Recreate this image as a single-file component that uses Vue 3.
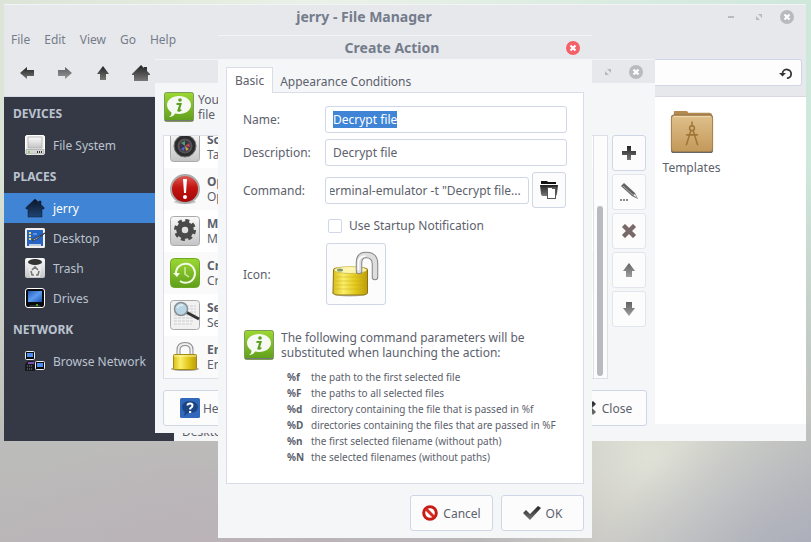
<script setup>
import { ref, onMounted } from 'vue'

const menus = ['File', 'Edit', 'View', 'Go', 'Help']
const navigation = [
  { icon: 'left', label: 'Back' },
  { icon: 'right', label: 'Forward', off: true },
  { icon: 'up', label: 'Parent folder' },
  { icon: 'house', label: 'Home' },
]
const groups = [
  { title: 'DEVICES', items: [{ name: 'File System', icon: 'disk' }] },
  {
    title: 'PLACES',
    items: [
      { name: 'jerry', icon: 'home', active: true },
      { name: 'Desktop', icon: 'desktop' },
      { name: 'Trash', icon: 'trash' },
      { name: 'Drives', icon: 'monitor' },
    ],
  },
  { title: 'NETWORK', items: [{ name: 'Browse Network', icon: 'network' }] },
]
const actions = [
  { name: 'Screenshot', note: 'Take a screenshot', icon: 'camera' },
  { name: 'Open as root', note: 'Open as root', icon: 'alert' },
  { name: 'Make executable', note: 'Make executable', icon: 'gear' },
  { name: 'Create backup', note: 'Create backup', icon: 'backup' },
  { name: 'Search', note: 'Search for files', icon: 'search' },
  { name: 'Encrypt file', note: 'Encrypt file', icon: 'lock' },
]
const tools = [
  { icon: 'plus', label: 'Add action' },
  { icon: 'pencil', label: 'Edit action', off: true },
  { icon: 'cross', label: 'Delete action', off: true },
  { icon: 'up', label: 'Move up', off: true },
  { icon: 'down', label: 'Move down', off: true },
]
const params = [
  ['%f', 'the path to the first selected file'],
  ['%F', 'the paths to all selected files'],
  ['%d', 'directory containing the file that is passed in %f'],
  ['%D', 'directories containing the files that are passed in %F'],
  ['%n', 'the first selected filename (without path)'],
  ['%N', 'the selected filenames (without paths)'],
]

const name = ref('Decrypt file')
const description = ref('Decrypt file')
const command = ref('x-terminal-emulator -t "Decrypt file...')
const notify = ref(false)
const nameField = ref(null)
const commandField = ref(null)

onMounted(() => {
  commandField.value.scrollLeft = commandField.value.scrollWidth
  nameField.value.focus()
  nameField.value.select()
})
</script>

<template>
  <div class="desk">
    <svg class="sprite" aria-hidden="true">
      <defs>
        <linearGradient id="ink" x2="0" y2="1"><stop stop-color="#222" /><stop offset="1" stop-color="#777" /></linearGradient>
        <linearGradient id="lime" x2="0" y2="1"><stop stop-color="#9bd832" /><stop offset="1" stop-color="#5f9e1c" /></linearGradient>
        <linearGradient id="metal" x2="0" y2="1"><stop stop-color="#fafafa" /><stop offset="1" stop-color="#c4c4c4" /></linearGradient>
        <linearGradient id="gold"><stop stop-color="#d9bd18" /><stop offset=".3" stop-color="#fbef6a" /><stop offset=".65" stop-color="#e2c81c" /><stop offset="1" stop-color="#bd9d0c" /></linearGradient>
        <linearGradient id="ruby" x2="0" y2="1"><stop stop-color="#e06058" /><stop offset=".45" stop-color="#c41410" /><stop offset="1" stop-color="#a00808" /></linearGradient>
        <linearGradient id="azure" x2="1" y2="1"><stop stop-color="#2458b0" /><stop offset=".5" stop-color="#5c9cf0" /><stop offset="1" stop-color="#1c50b0" /></linearGradient>
        <linearGradient id="tan" x2="0" y2="1"><stop stop-color="#dfc08b" /><stop offset="1" stop-color="#c3985a" /></linearGradient>
        <linearGradient id="navy" x2="0" y2="1"><stop stop-color="#0b1626" /><stop offset="1" stop-color="#1f4374" /></linearGradient>
      </defs>
      <symbol id="left" viewBox="0 0 20 20"><path d="M3 10l7-6v3h7v6h-7v3z" fill="url(#ink)" /></symbol>
      <symbol id="right" viewBox="0 0 20 20"><path d="M17 10l-7-6v3H3v6h7v3z" fill="url(#ink)" /></symbol>
      <symbol id="up" viewBox="0 0 20 20"><path d="M10 3l6 8h-3v6H7v-6H4z" fill="url(#ink)" /></symbol>
      <symbol id="down" viewBox="0 0 20 20"><path d="M10 17l6-8h-3V3H7v6H4z" fill="url(#ink)" /></symbol>
      <symbol id="house" viewBox="0 0 20 20"><path d="M10 2l3 3V4h3v4l3 3v1h-2v6H3v-6H1v-1z" fill="url(#ink)" /></symbol>
      <symbol id="plus" viewBox="0 0 20 20"><path d="M8 3h4v5h5v4h-5v5H8v-5H3V8h5z" fill="url(#ink)" /></symbol>
      <symbol id="cross" viewBox="0 0 20 20"><path d="M6 3l4 4 4-4 3 3-4 4 4 4-3 3-4-4-4 4-3-3 4-4-4-4z" fill="#3c2c2b" stroke="#9c6a67" stroke-width=".6" /></symbol>
      <symbol id="pencil" viewBox="0 0 20 20"><path d="M2 4l3-3 11 10 3 6-6-3z" fill="#222" /><path d="M4 4l10 9" stroke="#888" /><path d="M14 13l2-1 2 4z" fill="#eee" /><path d="M1 18h2m1 0h2m1 0h2" stroke="#222" stroke-width="1.500" /></symbol>
      <symbol id="reload" viewBox="0 0 16 16"><path d="M4 8a5 5 0 1 1 5 6" fill="none" stroke="#333" stroke-width="2" /><path d="M0 8h8l-4 4z" fill="#333" /></symbol>
      <symbol id="win-min" viewBox="0 0 14 14"><path d="M4 6h6v2H4z" fill="#b7babf" /></symbol>
      <symbol id="win-max" viewBox="0 0 14 14"><path d="M6 4h4v4zM4 6l4 4H4z" fill="#b7babf" /></symbol>
      <symbol id="win-close" viewBox="0 0 14 14"><circle cx="7" cy="7" r="7" fill="currentColor" /><path d="M4.500 4.500l5 5m0-5l-5 5" stroke="#fff" stroke-width="2.200" /></symbol>
      <symbol id="disk" viewBox="0 0 20 20"><rect x=".5" y=".5" width="19" height="19" rx="1.500" fill="#f0f0ee" stroke="#fff" /><path d="M3 2h14v11H3z" fill="url(#metal)" stroke="#aaa" stroke-width=".7" /><path d="M1 14.500h18V19H1z" fill="#d4d4d2" stroke="#999" stroke-width=".6" /><path d="M12 17h1m1 0h1m1 0h1" stroke="#333" stroke-width="2" /><circle cx="4" cy="17" r="1" fill="#7ac23a" /></symbol>
      <symbol id="home" viewBox="0 0 20 20"><path d="M10 1l4 3.500V3h2v3.500l3 3V11h-2v8H3v-8H1V9.500z" fill="url(#navy)" stroke="#0b1a30" stroke-width=".5" /></symbol>
      <symbol id="desktop" viewBox="0 0 20 20"><rect width="20" height="20" rx="1.500" fill="#f1f1f1" /><path d="M2 2h16v16H2z" fill="#2665c4" /><path d="M4 16h12v2H4z" fill="#c4cdda" /><path d="M5 4v8" stroke="#f6d75a" stroke-width="2" stroke-dasharray="2 1" /><path d="M8 6h4" stroke="#8fc0ff" /><path d="M7 12l4-2 9-5-8 6-4 2z" fill="#eee" stroke="#222" stroke-width=".8" /></symbol>
      <symbol id="trash" viewBox="0 0 20 20"><rect width="20" height="20" rx="2" fill="url(#metal)" /><path d="M3 5l2 14h10l2-14z" fill="#eaeaea" /><ellipse cx="10" cy="4" rx="7" ry="3" fill="#333" /><path d="M7 12l3-3 3 3m1 1l-1 4h-2m-2 0H7l-1-4" fill="none" stroke="#777" stroke-width="1.600" /></symbol>
      <symbol id="monitor" viewBox="0 0 20 20"><rect x=".5" y=".5" width="19" height="19" rx="2.500" fill="#080a0e" stroke="#fff" /><path d="M3 3h14v11H3z" fill="url(#azure)" /><path d="M5 17h10l1 2H4z" fill="#2c3036" /><circle cx="12" cy="17" r="1" fill="#65cc1c" /></symbol>
      <symbol id="network" viewBox="0 0 20 20"><rect x=".5" y=".5" width="9" height="8" rx="1" fill="#080a0e" stroke="#eee" /><path d="M2 2h6v4H2z" fill="#4a8cf0" /><path d="M1 12l2-2h5l2 2v8H0v-6z" fill="#17191f" /><path d="M3 12h6" stroke="#7d4fae" stroke-width="2" /><path d="M2 15h6m-6 3h6" stroke="#888" stroke-dasharray="1 1" /><rect x="10.500" y="10.500" width="9" height="8" rx="1" fill="#080a0e" stroke="#eee" /><path d="M12 12h6v4h-6z" fill="#4a8cf0" /></symbol>
      <symbol id="folder" viewBox="0 0 46 46"><path d="M4 6V2q0-1 1-1h12q2 0 2 2h22q3 0 3 3z" fill="#b58a4f" /><path d="M3 5h40q1 0 1 2v33H2V7z" fill="#a5783f" /><rect x="1" y="5" width="44" height="40" rx="3" fill="#626468" /><rect x="1.500" y="5.500" width="43" height="38" rx="3" fill="url(#tan)" stroke="#a98350" /><path d="M4 7h38" stroke="#f0d9ae" /><g fill="none" stroke="#9e7537" stroke-width="1.600"><path d="M23 12v5M22 21l-5 16M24 21l5 16M17 26h12" /><circle cx="23" cy="19" r="2.500" /></g></symbol>
      <symbol id="info" viewBox="0 0 30 30"><rect x=".5" y=".5" width="29" height="29" rx="2" fill="url(#lime)" stroke="#7e9a57" /><path d="M1 28.500h28" stroke="#777" /><path d="M15 4c7 0 12 4 12 9s-5 9-12 9l-4-.5c-1 2-3 3.500-6 3.500 2-1 2.500-3 2.500-4.500C5 19 3 16 3 13c0-5 5-9 12-9z" fill="#f7faf4" /><circle cx="16" cy="8" r="1.800" fill="#5ba01f" /><path d="M12.500 12h4l-2 6.500q1.500.5 2.500-1" fill="none" stroke="#5ba01f" stroke-width="2.200" /></symbol>
      <symbol id="camera" viewBox="0 0 30 30"><rect x=".5" y=".5" width="29" height="29" rx="3" fill="url(#metal)" stroke="#aaa" /><circle cx="15" cy="14" r="11" fill="#2c2c2e" stroke="#777" /><circle cx="15" cy="14" r="7.500" fill="#555" /><circle cx="15" cy="14" r="5.500" fill="#3b3050" /><path d="M15 14l-4-3 4-2z" fill="#4fa35a" /><path d="M15 14l4-3 1 4z" fill="#c24b4b" /><path d="M15 14l-4 3 3 2z" fill="#4a6ac4" /><path d="M15 14l1 5 3-2z" fill="#c9a53b" /></symbol>
      <symbol id="alert" viewBox="0 0 30 30"><ellipse cx="15" cy="28" rx="11" ry="2" fill="#ccc" /><circle cx="15" cy="15" r="14" fill="url(#ruby)" stroke="#aaa" stroke-width="2" /><path d="M13 5h4l-1 14h-2z" fill="#fff" /><circle cx="15" cy="23" r="2" fill="#fff" /></symbol>
      <symbol id="gear" viewBox="0 0 30 30"><rect x=".5" y=".5" width="29" height="29" rx="3" fill="url(#metal)" stroke="#aaa" /><circle cx="15" cy="14" r="6" fill="none" stroke="#4a4a4a" stroke-width="5.500" /><circle cx="15" cy="14" r="9.500" fill="none" stroke="#4a4a4a" stroke-width="3" stroke-dasharray="4 3.460" /></symbol>
      <symbol id="backup" viewBox="0 0 30 30"><rect x=".5" y=".5" width="29" height="29" rx="4" fill="url(#lime)" stroke="#6fa821" /><path d="M6 16a9.500 9.500 0 1 1 4 7" fill="none" stroke="#f4fae8" stroke-width="2" /><path d="M3 15h7l-3 4z" fill="#f4fae8" /><path d="M15 9v7l4 3" fill="none" stroke="#cfeaa0" stroke-width="1.500" /></symbol>
      <symbol id="search" viewBox="0 0 30 30"><rect x=".5" y=".5" width="29" height="29" rx="3" fill="#f1f1f1" stroke="#aaa" /><path d="M4 6h22M4 9h22M4 12h22M4 15h22M4 18h22M4 21h20M4 24h18" stroke="#ccc" stroke-dasharray="3 1" /><path d="M16 12l13 7" stroke="#333" stroke-width="3" /><circle cx="11" cy="9" r="6.500" fill="#b9d6e4" stroke="#8a8f94" stroke-width="1.500" /><path d="M7 8q2-4 6-3" stroke="#fff" fill="none" /></symbol>
      <symbol id="lock" viewBox="0 0 30 30"><ellipse cx="15" cy="27" rx="14" ry="2" fill="#aaa" /><path d="M8.500 14V8q0-6 6.500-6t6.500 6v6" fill="none" stroke="#8c8c8c" stroke-width="4" /><path d="M8.500 14V8q0-6 6.500-6t6.500 6v6" fill="none" stroke="#eee" stroke-width="2" /><rect x="3.500" y="12.500" width="23" height="15" rx="1" fill="url(#gold)" stroke="#a38c10" /><path d="M4 14h22" stroke="#fff9b0" /></symbol>
      <symbol id="unlock" viewBox="0 0 48 48"><ellipse cx="18" cy="43" rx="18" ry="3.500" fill="#888" opacity=".6" /><path d="M1.500 20q0-2 3-2h28q3 0 3 2v22q0 3-5 3H6q-5 0-5-3z" fill="url(#gold)" stroke="#8d7411" /><ellipse cx="18.500" cy="20" rx="16.500" ry="3.500" fill="#fbf5b0" stroke="#c0a830" stroke-width=".6" /><path d="M3 27h31M3 31h31M3 35h31M3 39h31" stroke="#c5aa12" stroke-width=".7" opacity=".6" /><ellipse cx="8" cy="20" rx="3" ry="1.500" fill="#7f9a68" /><path d="M27 21v-8q0-8 7-8 9 0 9 9v13" fill="none" stroke="#858585" stroke-width="6.500" stroke-linecap="round" /><path d="M27 21v-8q0-8 7-8 9 0 9 9v13" fill="none" stroke="#dedede" stroke-width="4.500" stroke-linecap="round" /><path d="M26.500 20v-7q0-7 7-7" fill="none" stroke="#fff" stroke-width="1.500" /></symbol>
      <symbol id="help" viewBox="0 0 20 20"><rect width="20" height="20" rx="1.500" fill="#3268bb" /><path d="M10 3c5 0 8 3 8 6s-3 6-8 6l-2 0-4 3 1-4C3 13 2 11 2 9c0-3 3-6 8-6z" fill="#1b4484" /><path d="M7.500 7.500q0-2 2.500-2t2.500 2q0 1.500-2.300 3v1" fill="none" stroke="#fff" stroke-width="2" /><path d="M9 13h2.200v2H9z" fill="#fff" /></symbol>
      <symbol id="quit" viewBox="0 0 20 20"><path d="M6 3l4 4 4-4 3 3-4 4 4 4-3 3-4-4-4 4-3-3 4-4-4-4z" fill="url(#ink)" /></symbol>
      <symbol id="browse" viewBox="0 0 20 20"><path d="M2 1h6l1 1h8v2H2z" fill="#111" /><path d="M1 5h18l-1 9q0 2-2 2H4q-2 0-2-2z" fill="url(#ink)" /><path d="M8 7h9v12H8z" fill="#555" /><path d="M9 8h4v1h3v9H9z" fill="#fff" /></symbol>
      <symbol id="deny" viewBox="0 0 16 16"><circle cx="8" cy="8" r="6.300" fill="#fff" stroke="#c61c14" stroke-width="3" /><path d="M4 4l8 8" stroke="#d52b20" stroke-width="3" /></symbol>
      <symbol id="tick" viewBox="0 0 18 14"><path d="M0 7l3-3 4 4 8-8 3 2L7 14z" fill="url(#ink)" /></symbol>
    </svg>

    <section class="window manager">
      <header class="titlebar">
        <h1>jerry - File Manager</h1>
        <div class="controls">
          <button aria-label="Minimize"><svg><use href="#win-min" /></svg></button>
          <button aria-label="Maximize"><svg><use href="#win-max" /></svg></button>
          <button aria-label="Close window"><svg><use href="#win-close" /></svg></button>
        </div>
      </header>
      <nav class="menubar"><button v-for="m in menus" :key="m">{{ m }}</button></nav>
      <div class="toolbar">
        <button v-for="n in navigation" :key="n.icon" :aria-label="n.label" :class="{ off: n.off }">
          <svg><use :href="'#' + n.icon" /></svg>
        </button>
        <div class="location">
          <input type="text" aria-label="Location" />
          <button aria-label="Reload"><svg><use href="#reload" /></svg></button>
        </div>
      </div>
      <div class="panes">
        <aside>
          <template v-for="g in groups" :key="g.title">
            <h2>{{ g.title }}</h2>
            <a v-for="i in g.items" :key="i.name" href="#" :class="{ active: i.active }">
              <svg><use :href="'#' + i.icon" /></svg>{{ i.name }}
            </a>
          </template>
        </aside>
        <div class="browser">
          <main class="files">
            <a class="file" href="#"><svg><use href="#folder" /></svg>Templates</a>
          </main>
          <footer class="status">Desktop</footer>
        </div>
      </div>
    </section>

    <section class="window custom">
      <header class="titlebar">
        <div class="controls">
          <button aria-label="Maximize"><svg><use href="#win-max" /></svg></button>
          <button aria-label="Close window"><svg><use href="#win-close" /></svg></button>
        </div>
      </header>
      <div class="custom-body">
        <div class="notice">
          <svg><use href="#info" /></svg>
          <p>You can configure custom actions for the<br />file manager context menus.</p>
        </div>
        <div class="chooser">
          <div class="list">
            <ul>
              <li v-for="a in actions" :key="a.icon">
                <svg><use :href="'#' + a.icon" /></svg>
                <p><b>{{ a.name }}</b><br />{{ a.note }}</p>
              </li>
            </ul>
            <div class="track"><div class="thumb"></div></div>
          </div>
          <div class="tools">
            <button v-for="t in tools" :key="t.icon" class="btn" :class="{ off: t.off }" :aria-label="t.label">
              <svg><use :href="'#' + t.icon" /></svg>
            </button>
          </div>
        </div>
        <div class="custom-buttons">
          <button class="btn"><svg><use href="#help" /></svg>Help</button>
          <button class="btn"><svg><use href="#quit" /></svg>Close</button>
        </div>
      </div>
    </section>

    <section class="window dialog">
      <header class="titlebar">
        <h1>Create Action</h1>
        <div class="controls">
          <button class="red" aria-label="Close dialog"><svg><use href="#win-close" /></svg></button>
        </div>
      </header>
      <div class="dialog-body">
        <div class="tabs">
          <button class="current">Basic</button>
          <button>Appearance Conditions</button>
        </div>
        <div class="panel">
          <form class="form" @submit.prevent>
            <label for="name">Name:</label>
            <input id="name" ref="nameField" v-model="name" type="text" />
            <label for="description">Description:</label>
            <input id="description" v-model="description" type="text" />
            <label for="command">Command:</label>
            <div class="command">
              <input id="command" ref="commandField" v-model="command" type="text" />
              <button type="button" class="btn" aria-label="Browse"><svg><use href="#browse" /></svg></button>
            </div>
            <label class="check"><input v-model="notify" type="checkbox" />Use Startup Notification</label>
            <label for="icon">Icon:</label>
            <button id="icon" type="button" class="btn picker"><svg><use href="#unlock" /></svg></button>
          </form>
          <div class="notice">
            <svg><use href="#info" /></svg>
            <p>The following command parameters will be<br />substituted when launching the action:</p>
          </div>
          <dl>
            <template v-for="p in params" :key="p[0]"><dt>{{ p[0] }}</dt><dd>{{ p[1] }}</dd></template>
          </dl>
        </div>
        <div class="dialog-buttons">
          <button class="btn"><svg class="deny"><use href="#deny" /></svg>Cancel</button>
          <button class="btn"><svg class="tick"><use href="#tick" /></svg>OK</button>
        </div>
      </div>
    </section>
  </div>
</template>

<style>
body {
  margin: 0;
}
</style>

<style scoped>
.desk {
  position: relative;
  min-height: 100vh;
  overflow: hidden;
  font: 12px/15px "Noto Sans", sans-serif;
  color: #5c616c;
  background:
    radial-gradient(ellipse 26% 30% at 100% 106%, #a9adbb, transparent),
    radial-gradient(ellipse 24% 34% at 80% 84%, #e0e1d6, transparent),
    radial-gradient(ellipse 30% 22% at 28% 100%, #bbb3b8, transparent),
    linear-gradient(180deg, transparent 30%, #bcbdba 80%, #b9b6b8),
    linear-gradient(90deg, #dbe4d6, #eaf1e8 40%, #cfe8dc);
}
.desk *,
.desk *::before {
  box-sizing: border-box;
}
.sprite {
  position: absolute;
  width: 0;
  height: 0;
}
h1, h2, p, ul, dl, dd {
  margin: 0;
  padding: 0;
}
button {
  margin: 0;
  padding: 0;
  border: 0;
  background: none;
  font: inherit;
  color: inherit;
}
input {
  font: inherit;
  color: inherit;
}
a {
  color: inherit;
  text-decoration: none;
}
svg {
  flex: none;
  display: block;
  width: 20px;
  height: 20px;
}
.window {
  position: absolute;
  background: #f5f6f8;
}
.manager {
  top: 4px;
  left: 4px;
  right: 5px;
}
.custom {
  top: 59px;
  left: 155px;
  right: 156px;
}
.dialog {
  top: 35px;
  left: 218px;
  right: 219px;
}
.titlebar {
  display: flex;
  align-items: center;
  justify-content: flex-end;
  height: 24px;
  padding-right: 12px;
  background: #e7e8eb;
  border-top: 1px solid #f3f4f6;
}
h1 {
  flex: 1;
  font-size: 14px;
  line-height: 15px;
  text-align: center;
  color: #747c8c;
}
.controls {
  display: flex;
  gap: 14px;
  color: #b7babf;
}
.controls svg {
  width: 14px;
  height: 14px;
}
.controls .red {
  color: #f46067;
}
.menubar {
  display: flex;
  gap: 14px;
  height: 24px;
  padding: 0 7px 2px;
  background: #e7e8eb;
  color: #747c8c;
}
.toolbar {
  display: flex;
  align-items: center;
  gap: 18px;
  height: 45px;
  padding: 0 4px 3px 13px;
  background: #e7e8eb;
  border-bottom: 1px solid #d7d9e2;
}
.location {
  flex: 1;
  display: flex;
  align-items: center;
  height: 27px;
  padding-right: 8px;
  background: #fdfdfd;
  border: 1px solid #cfd6e6;
  border-radius: 3px;
}
.location input {
  flex: 1;
  min-width: 0;
  border: 0;
  background: none;
}
.location svg {
  width: 14px;
  height: 14px;
}
.off svg {
  opacity: 0.7;
}
.panes {
  display: flex;
  height: 344px;
}
aside {
  width: 170px;
  background: #353945;
  color: #bac3cf;
}
aside h2 {
  padding-left: 9px;
  font-size: 12px;
  line-height: 33px;
}
aside a {
  display: flex;
  align-items: center;
  gap: 8px;
  height: 30px;
  padding-left: 21px;
}
aside .active {
  background: #4084d6;
  color: #fff;
}
.browser {
  flex: 1;
  display: flex;
  flex-direction: column;
}
.files {
  flex: 1;
  display: grid;
  grid-template-columns: repeat(auto-fill, 115px);
  align-content: start;
  padding-top: 13px;
  background: #fff;
}
.file {
  grid-column: 5;
  display: flex;
  flex-direction: column;
  align-items: center;
  gap: 6px;
}
.file svg {
  width: 44px;
  height: 44px;
}
.status {
  height: 17px;
  padding-left: 8px;
}
.custom-body {
  padding: 9px 8px 7px;
}
.notice {
  display: flex;
  gap: 4px;
  padding-left: 1px;
}
.notice svg,
.list svg {
  width: 30px;
  height: 30px;
}
.chooser {
  display: flex;
  gap: 4px;
  margin-top: 13px;
  padding-right: 1px;
}
.list {
  flex: 1;
  display: flex;
  height: 244px;
  overflow: hidden;
  border: 1px solid #dcdfe6;
  background: #fff;
}
.list ul {
  flex: 1;
  display: flex;
  flex-direction: column;
  justify-content: flex-end;
}
.list li {
  flex: none;
  display: flex;
  align-items: center;
  gap: 7px;
  height: 42px;
  padding-left: 6px;
}
.list li:nth-child(even) {
  background: #fafafa;
}
.track {
  display: flex;
  align-items: flex-end;
  width: 14px;
  padding: 2px 3px;
  background: #fcfcfc;
  border-left: 1px solid #dcdfe6;
}
.thumb {
  width: 6px;
  height: 170px;
  border-radius: 3px;
  background: #b7babf;
}
.tools {
  display: flex;
  flex-direction: column;
  gap: 3px;
}
.btn {
  display: flex;
  align-items: center;
  justify-content: center;
  min-width: 34px;
  height: 36px;
  background: #fcfcfd;
  border: 1px solid #cfd6e6;
  border-radius: 3px;
}
.btn.off {
  border-color: #e2e5ee;
}
.custom-buttons {
  display: flex;
  justify-content: space-between;
  margin-top: 11px;
}
.custom-buttons .btn {
  width: 83px;
  gap: 3px;
}
.dialog-body {
  padding: 8px 8px 7px;
}
.tabs {
  display: flex;
}
.tabs button {
  height: 26px;
  margin-bottom: -1px;
  padding: 2px 7px 0;
}
.tabs .current {
  padding: 0 8px;
  background: #fff;
  border: 1px solid #d9dde6;
  border-bottom: 0;
  z-index: 1;
}
.panel {
  height: 392px;
  padding: 13px 16px;
  background: #fff;
  border: 1px solid #d9dde6;
}
.form {
  display: grid;
  grid-template-columns: 82px 1fr;
  align-items: center;
  row-gap: 6px;
}
.form input[type="text"] {
  width: 100%;
  min-width: 0;
  height: 27px;
  padding: 0 7px;
  background: #fff;
  border: 1px solid #cfd6e6;
  border-radius: 3px;
  outline: 0;
}
.form input::selection {
  background: #4084d6;
  color: #fff;
}
.command {
  display: flex;
  align-items: center;
  gap: 3px;
  padding-right: 1px;
}
.form .command input[type="text"] {
  padding: 0 7px 0 4px;
}
.check {
  grid-column: 2;
  display: flex;
  align-items: center;
  gap: 7px;
  padding: 4px 3px;
}
.check input {
  appearance: none;
  width: 14px;
  height: 14px;
  margin: 0;
  border: 1px solid #cfd6e6;
  border-radius: 2px;
}
.picker {
  width: 60px;
  height: 62px;
  margin-left: 1px;
}
.picker svg {
  width: 48px;
  height: 48px;
}
.panel .notice {
  gap: 7px;
  margin-top: 25px;
}
dl {
  display: grid;
  grid-template-columns: 24px 1fr;
  padding: 9px 0 0 44px;
  font-size: 10px;
  line-height: 16px;
}
dt {
  font-weight: bold;
}
.dialog-buttons {
  display: flex;
  justify-content: flex-end;
  gap: 8px;
  margin-top: 11px;
}
.dialog-buttons .btn {
  width: 83px;
  gap: 5px;
}
.deny {
  width: 16px;
  height: 16px;
}
.tick {
  width: 18px;
  height: 14px;
}
</style>
